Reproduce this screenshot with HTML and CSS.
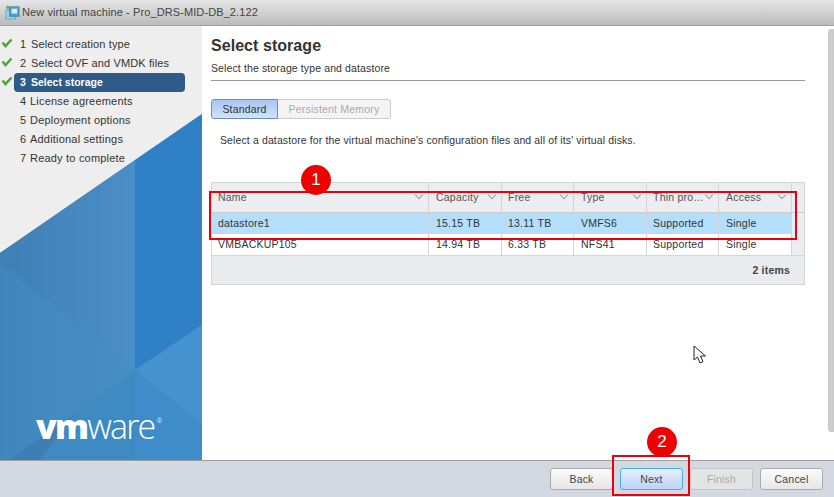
FILE: index.html
```html
<!DOCTYPE html>
<html lang="en">
<head>
<meta charset="utf-8">
<title>New virtual machine</title>
<link rel="stylesheet" href="styles.css">
</head>
<body>
<div class="dialog">
  <header class="titlebar">
    <svg class="title-icon" width="15" height="15" viewBox="0 0 16 16"><rect x="1" y="5" width="10" height="10" fill="#9fd0ea" stroke="#6aa9bf"/><rect x="5" y="2" width="10" height="10" fill="#4ba3d6" stroke="#3d87a8"/><rect x="7" y="4" width="6" height="5" fill="#d8eef8"/><path d="M1 2.500h4M3 .5v4" stroke="#5fae4e" stroke-width="1.500"/></svg>
    <span class="title-text">New virtual machine - Pro_DRS-MID-DB_2.122</span>
  </header>
  <div class="body">
    <aside class="sidebar">
      <svg class="art" width="202" height="435" viewBox="0 0 202 435">
        <defs>
          <linearGradient id="lg1" x1="0" x2="1" y1="0" y2="0"><stop offset="0" stop-color="#3e7fb4"/><stop offset="1" stop-color="#4b8fc9"/></linearGradient>
          <linearGradient id="lg2" x1="0" x2="1" y1="0" y2="0"><stop offset="0" stop-color="#3f87bb"/><stop offset="1" stop-color="#4a93cd"/></linearGradient>
        </defs>
        <polygon points="202,88 0,227 0,435 202,435" fill="url(#lg2)"/>
        <polygon points="135,134 0,227 0,237 135,344" fill="url(#lg1)"/>
        <polygon points="135,134 202,88 202,299 135,344" fill="#3080c6"/>
        <polygon points="135,344 202,299 202,398" fill="#4592d0"/>
        <polygon points="135,344 202,398 202,435 135,435" fill="#3f8ccb"/>
        <polygon points="135,344 8,434 135,434" fill="#3e8bc4"/>
        <polygon points="8,434 75,388 40,434" fill="#3d7fb2"/>
      </svg>
      <ol class="steps">
        <li class="step done"><svg class="check" width="12" height="10" viewBox="0 0 12 10"><path d="M1.500 4.500 4.500 8 10.500 1.500" fill="none" stroke="#4aa83a" stroke-width="2.500"/></svg><span class="num">1</span>Select creation type</li>
        <li class="step done"><svg class="check" width="12" height="10" viewBox="0 0 12 10"><path d="M1.500 4.500 4.500 8 10.500 1.500" fill="none" stroke="#4aa83a" stroke-width="2.500"/></svg><span class="num">2</span>Select OVF and VMDK files</li>
        <li class="step done active"><svg class="check" width="12" height="10" viewBox="0 0 12 10"><path d="M1.500 4.500 4.500 8 10.500 1.500" fill="none" stroke="#4aa83a" stroke-width="2.500"/></svg><span class="num">3</span>Select storage</li>
        <li class="step"><span class="num">4</span>License agreements</li>
        <li class="step"><span class="num">5</span>Deployment options</li>
        <li class="step"><span class="num">6</span>Additional settings</li>
        <li class="step"><span class="num">7</span>Ready to complete</li>
      </ol>
      <div class="logo"><b>vm</b>ware<sup>®</sup></div>
    </aside>
    <main class="content">
      <div class="pane">
        <h1 class="heading">Select storage</h1>
        <p class="subheading">Select the storage type and datastore</p>
        <div class="tabs">
          <button class="tab tab-on">Standard</button>
          <button class="tab tab-off">Persistent Memory</button>
        </div>
        <p class="intro">Select a datastore for the virtual machine's configuration files and all of its' virtual disks.</p>
        <div class="grid">
          <div class="row head">
            <div class="cell c1">Name<i class="chev"></i></div>
            <div class="cell c2">Capacity<i class="chev"></i></div>
            <div class="cell c3">Free<i class="chev"></i></div>
            <div class="cell c4">Type<i class="chev"></i></div>
            <div class="cell c5">Thin pro…<i class="chev"></i></div>
            <div class="cell c6">Access<i class="chev"></i></div>
            <div class="cell c7"></div>
          </div>
          <div class="row data selected">
            <div class="cell c1">datastore1</div>
            <div class="cell c2">15.15 TB</div>
            <div class="cell c3">13.11 TB</div>
            <div class="cell c4">VMFS6</div>
            <div class="cell c5">Supported</div>
            <div class="cell c6">Single</div>
            <div class="cell c7"></div>
          </div>
          <div class="row data">
            <div class="cell c1">VMBACKUP105</div>
            <div class="cell c2">14.94 TB</div>
            <div class="cell c3">6.33 TB</div>
            <div class="cell c4">NFS41</div>
            <div class="cell c5">Supported</div>
            <div class="cell c6">Single</div>
            <div class="cell c7"></div>
          </div>
          <div class="gridfoot">2 items</div>
        </div>
      </div>
      <div class="scrollbar"></div>
    </main>
  </div>
  <footer class="footer">
    <button class="btn">Back</button>
    <button class="btn btn-next">Next</button>
    <button class="btn btn-disabled">Finish</button>
    <button class="btn">Cancel</button>
  </footer>
</div>
<div class="mark mark1"></div>
<div class="badge badge1">1</div>
<div class="mark mark2"></div>
<div class="badge badge2">2</div>
<svg class="cursor" width="14" height="20" viewBox="0 0 14 20"><path d="M1 1v14l3.500-3 2.500 6 3-1.300-2.500-5.700H12.500z" fill="#fff" stroke="#222" stroke-width="1"/></svg>
</body>
</html>
```

FILE: styles.css
```css
* { box-sizing: border-box; }
html, body { margin: 0; padding: 0; }
body { width: 834px; height: 497px; overflow: hidden; position: relative; font-family: "Liberation Sans", Arial, sans-serif; font-size: 10.5px; color: #333; background: #fff; }
.dialog { width: 834px; height: 497px; display: flex; flex-direction: column; }
.titlebar { height: 26px; flex: none; display: flex; align-items: center; gap: 2px; padding: 0 0 1px 5px; background: linear-gradient(#e6e6e6, #bbbbbb); border-bottom: 1px solid #a0a0a0; color: #444; font-size: 11px; letter-spacing: .1px; }
.title-icon { flex: none; }
.body { flex: 1; display: flex; min-height: 0; }
.sidebar { width: 202px; flex: none; position: relative; background: #eee; overflow: hidden; }
.art { position: absolute; left: 0; top: 0; }
.steps { position: relative; list-style: none; margin: 0; padding: 9px 0 0; }
.step { height: 19px; display: flex; align-items: center; padding: 0 0 2px 20px; position: relative; color: #333; font-size: 11px; letter-spacing: .2px; }
.step .num { width: 10px; }
.step.done .num { width: 11px; }
.step.done { letter-spacing: .12px; }
.step.active { color: #fff; font-weight: bold; font-size: 10.5px; letter-spacing: 0; margin: 0 17px 0 14px; padding-left: 6px; background: #2e5b87; border-radius: 4px; }
.check { position: absolute; left: 1px; top: 3px; }
.step.active .check { left: -13px; }
.logo { position: absolute; left: 36px; top: 380px; color: #fff; font-family: "Open Sans", sans-serif; font-size: 34px; line-height: 40px; letter-spacing: -1.800px; font-weight: 300; }
.logo b { font-weight: 800; }
.logo sup { font-size: 7px; line-height: 7px; letter-spacing: 0; vertical-align: top; position: relative; top: 11px; left: 2px; }
.content { flex: 1; display: flex; min-width: 0; position: relative; }
.pane { flex: 1; padding: 0 29px 0 9px; min-width: 0; }
.heading { margin: 10px 0 0; font-size: 16px; line-height: 19px; font-weight: bold; color: #333; letter-spacing: .05px; }
.subheading { margin: 7px 0 0; padding-bottom: 5px; line-height: 13px; border-bottom: 1px solid #999; color: #333; font-size: 10.5px; letter-spacing: .12px; }
.tabs { display: flex; margin: 18px 0 0; }
.tab { height: 20px; padding: 0; font: inherit; font-size: 10.5px; letter-spacing: .2px; }
.tab-on { width: 67px; border: 1px solid #6c8db5; border-radius: 3px 0 0 3px; color: #333; background: linear-gradient(#a9c5f2, #d3e2fb); }
.tab-off { width: 113px; border: 1px solid #ccc; border-left: 0; border-radius: 0 3px 3px 0; color: #aaa; background: #f4f4f4; }
.intro { margin: 15px 0 0 9px; line-height: 13px; letter-spacing: .12px; }
.grid { margin-top: 35px; width: 594px; border: 1px solid #d4d4d4; background: #e9ecef; }
.row { display: flex; }
.head { height: 30px; background: #ebedf0; border-bottom: 1px solid #ccc; }
.data { height: 21px; background: #fff; }
.selected { background: #b3dffd; }
.cell { position: relative; padding: 0 6px; line-height: 21px; border-right: 1px solid #d4d4d4; white-space: nowrap; overflow: hidden; letter-spacing: .22px; }
.head .cell { padding-top: 4px; color: #555; }
.c1 { width: 217px; }
.c2 { width: 73px; padding-left: 7px; }
.c3 { width: 72px; }
.c4 { width: 73px; padding-left: 7px; }
.c5 { width: 72px; }
.c6 { width: 73px; padding-left: 7px; }
.c7 { flex: 1; border-right: 0; }
.data .c7 { background: #ebedf0; }
.chev { position: absolute; right: 6px; top: 9px; width: 6px; height: 6px; border-right: 1px solid #a0a0a0; border-bottom: 1px solid #a0a0a0; transform: rotate(45deg); }
.gridfoot { height: 29px; line-height: 29px; text-align: right; padding-right: 14px; font-weight: bold; color: #444; border-top: 1px solid #d4d4d4; letter-spacing: .2px; }
.scrollbar { position: absolute; right: 0; top: 3px; width: 6px; height: 403px; background: #ccc; border-radius: 3px 0 0 3px; }
.footer { height: 37px; flex: none; display: flex; align-items: center; justify-content: flex-end; gap: 7px; padding: 0 11px 1px 0; background: #d4d8e1; border-top: 1px solid #a0a0a0; }
.btn { width: 63px; height: 22px; padding: 0; font: inherit; font-size: 10.5px; letter-spacing: .2px; color: #444; border: 1px solid #aaa; border-radius: 3px; background: linear-gradient(#fbfbfb, #e6e6e6); }
.btn-next { border: 1px solid #3fb4e6; background: linear-gradient(#e6effd, #bcd3f8); }
.btn-disabled { color: #aaa; border-color: #c4c4c4; background: #e3e4e6; }
.mark { position: absolute; border: 2px solid #e8000f; }
.mark1 { left: 209px; top: 191px; width: 588px; height: 49px; }
.mark2 { left: 612px; top: 455px; width: 78px; height: 41px; }
.badge { position: absolute; width: 30px; height: 30px; border-radius: 50%; background: #ee0000; color: #fff; font-size: 17px; line-height: 30px; text-align: center; }
.badge1 { left: 301px; top: 165px; }
.badge2 { left: 647px; top: 427px; }
.cursor { position: absolute; left: 693px; top: 345px; }
```
